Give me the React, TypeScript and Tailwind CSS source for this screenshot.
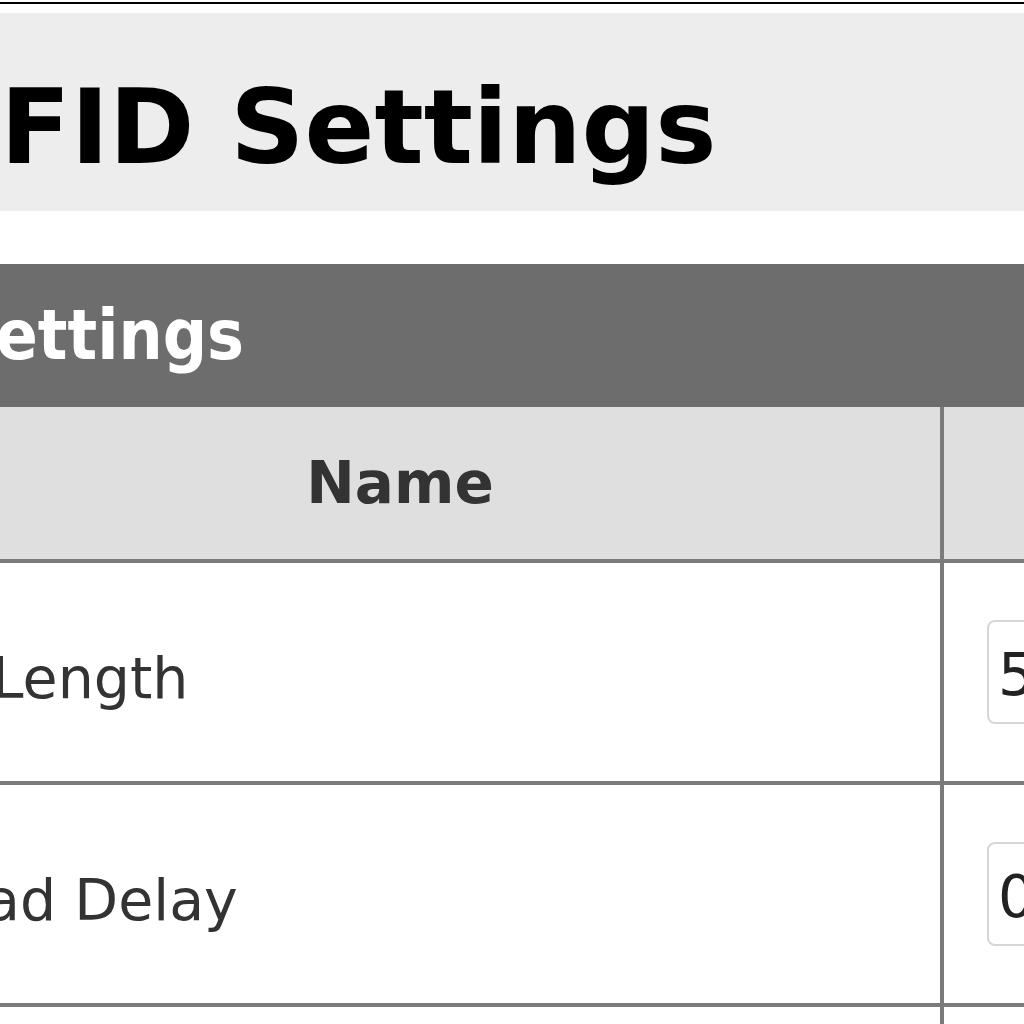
import React from 'react';

interface SettingRow {
  label: string;
  value: string;
}

const rows: SettingRow[] = [
  { label: 'ID Length', value: '5' },
  { label: 'Read Delay', value: '0' },
  { label: 'Beep', value: '1' },
];

function Row({ label, value }: SettingRow) {
  return (
    <div className="flex h-[222px] border-b-4 border-[#7b7b7b] bg-white">
      <div className="w-[1080px] shrink-0 flex items-center pl-[53px] pt-[12px] text-[57px] leading-none text-[#333]">
        {label}
      </div>
      <div className="flex-1 flex items-center border-l-4 border-[#7b7b7b] pl-[43px]">
        <input
          readOnly
          value={value}
          className="h-[104px] w-[320px] rounded-[8px] border-2 border-[#d6d6d6] bg-white pl-[9px] pt-[6px] text-[58px] leading-none text-[#222] outline-none font-['DejaVu_Sans',sans-serif]"
        />
      </div>
    </div>
  );
}

export default function App() {
  return (
    <div className="w-[1024px] h-[1024px] overflow-hidden bg-white font-['DejaVu_Sans',sans-serif]">
      <div className="-ml-[140px] w-[1800px]">
        <div className="mt-[2px] h-[2px] bg-black" />

        <div className="mt-[9px] flex h-[198px] items-end bg-[#ededed] pl-[61px] pb-[32px]">
          <h1 className="text-[103px] font-bold leading-none text-black">RFID Settings</h1>
        </div>

        <div className="mt-[53px] flex h-[143px] items-center bg-[#6d6d6d] pl-[91px]">
          <h2 className="text-[69px] font-bold leading-none text-white font-['DejaVu_Sans_Condensed','DejaVu_Sans',sans-serif]">
            Settings
          </h2>
        </div>

        <div className="flex h-[156px] border-b-4 border-[#7b7b7b] bg-[#dfdfdf]">
          <div className="w-[1080px] shrink-0 flex items-center justify-center text-[58px] font-bold leading-none text-[#333]">
            Name
          </div>
          <div className="w-[520px] flex items-center justify-center border-l-4 border-[#7b7b7b] text-[58px] font-bold leading-none text-[#333]">
            Value
          </div>
        </div>

        {rows.map((row) => (
          <Row key={row.label} {...row} />
        ))}
      </div>
    </div>
  );
}
